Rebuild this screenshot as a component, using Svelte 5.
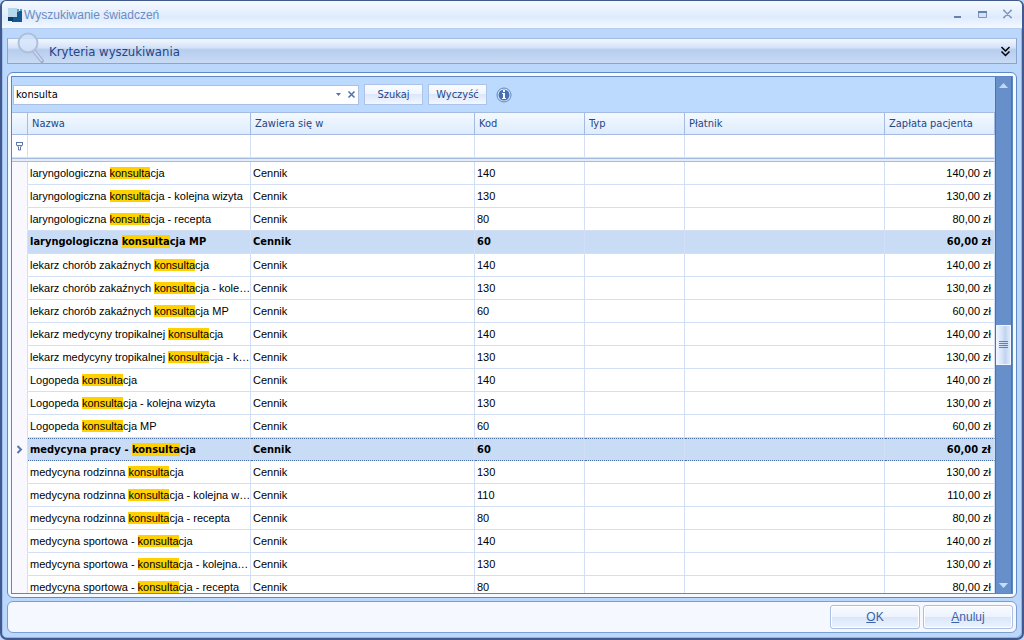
<script>
  let query = "konsulta";

  const columns = [
    { title: "Nazwa", cls: "name" },
    { title: "Zawiera się w", cls: "parent" },
    { title: "Kod", cls: "code" },
    { title: "Typ", cls: "type" },
    { title: "Płatnik", cls: "payer" },
    { title: "Zapłata pacjenta", cls: "price" },
  ];

  let rows = [
    { before: "laryngologiczna ", after: "cja", code: 140 },
    { before: "laryngologiczna ", after: "cja - kolejna wizyta", code: 130 },
    { before: "laryngologiczna ", after: "cja - recepta", code: 80 },
    { before: "laryngologiczna ", after: "cja MP", code: 60, bold: true },
    { before: "lekarz chorób zakaźnych ", after: "cja", code: 140 },
    { before: "lekarz chorób zakaźnych ", after: "cja - kole…", code: 130 },
    { before: "lekarz chorób zakaźnych ", after: "cja MP", code: 60 },
    { before: "lekarz medycyny tropikalnej ", after: "cja", code: 140 },
    { before: "lekarz medycyny tropikalnej ", after: "cja - k…", code: 130 },
    { before: "Logopeda ", after: "cja", code: 140 },
    { before: "Logopeda ", after: "cja - kolejna wizyta", code: 130 },
    { before: "Logopeda ", after: "cja MP", code: 60 },
    { before: "medycyna pracy - ", after: "cja", code: 60, bold: true },
    { before: "medycyna rodzinna ", after: "cja", code: 130 },
    { before: "medycyna rodzinna ", after: "cja - kolejna w…", code: 110 },
    { before: "medycyna rodzinna ", after: "cja - recepta", code: 80 },
    { before: "medycyna sportowa - ", after: "cja", code: 140 },
    { before: "medycyna sportowa - ", after: "cja - kolejna…", code: 130 },
    { before: "medycyna sportowa - ", after: "cja - recepta", code: 80 },
  ];
  let selected = 12;
  let scrolled = 0.48;
</script>

<div class="window">
  <header class="titlebar">
    <svg class="logo" width="16" height="16" viewBox="0 0 16 16">
      <path d="M5 4h10v11H5z" fill="#17578f" />
      <path d="M10 2h2v3h-2zM13 2h2v2h-2z" fill="#5d9cc6" />
      <path d="M1 1h9v9H1z" fill="#b5d8ea" />
      <path d="M1 10h5v4H1z" fill="#0e3c69" />
    </svg>
    <h1>Wyszukiwanie świadczeń</h1>
    <button class="sys" aria-label="Minimalizuj">
      <svg width="11" height="11" viewBox="0 0 11 11"><path d="M2 7h7v2H2z" fill="#6681ae" /></svg>
    </button>
    <button class="sys" aria-label="Maksymalizuj">
      <svg width="11" height="11" viewBox="0 0 11 11">
        <path d="M1.5 2.5h8v6h-8z" fill="#d3e2f8" stroke="#7b96c2" />
        <path d="M1 2h9v2H1z" fill="#6681ae" />
      </svg>
    </button>
    <button class="sys" aria-label="Zamknij">
      <svg width="11" height="11" viewBox="0 0 11 11">
        <path d="M2 1.5l7 7M9 1.5l-7 7M1 1.500h2M8 1.500h2M1 8.500h2M8 8.500h2" stroke="#8298bd" stroke-width="1.6" />
      </svg>
    </button>
  </header>

  <button class="criteria">
    <svg class="lens" width="30" height="32" viewBox="0 0 30 32">
      <path d="M18 19l8 10" stroke="#9fb0d2" stroke-width="4" stroke-linecap="round" />
      <path d="M18 19l8 10" stroke="#c9d6ee" stroke-width="2" />
      <circle cx="12" cy="11" r="9.500" fill="#d5e4fa" fill-opacity=".8" stroke="#b0bfda" stroke-width="2" />
    </svg>
    <span>Kryteria wyszukiwania</span>
    <svg width="11" height="11" viewBox="0 0 11 11">
      <path d="M1.5 1l4 4 4-4M1.5 5.500l4 4 4-4" fill="none" stroke="#000" stroke-width="1.5" />
    </svg>
  </button>

  <main class="panel">
    <div class="inner">
      <div class="content">
        <div class="search">
          <div class="combo">
            <input aria-label="Szukana fraza" bind:value={query} />
            <button aria-label="Rozwiń">
              <svg width="7" height="5" viewBox="0 0 7 5"><path d="M1 1h5L3.500 4z" fill="#5273ac" /></svg>
            </button>
            <button aria-label="Usuń tekst" on:click={() => (query = "")}>
              <svg width="9" height="9" viewBox="0 0 9 9">
                <path d="M1.500 1.500l6 6M7.500 1.500l-6 6" stroke="#5273ac" stroke-width="1.6" />
              </svg>
            </button>
          </div>
          <button class="small">Szukaj</button>
          <button class="small">Wyczyść</button>
          <svg class="info" width="16" height="16" viewBox="0 0 16 16">
            <circle cx="8" cy="8" r="7" fill="#dceafb" stroke="#5f84bd" />
            <circle cx="8" cy="8" r="5.500" fill="#4672b5" />
            <path d="M7 3h2v2H7zM6 6h3v5h1v1H6v-1h1V7H6z" fill="#fff" />
          </svg>
        </div>

        <div class="grid">
          <table>
            <colgroup>
              <col class="mark" />
              {#each columns as column}
                <col class={column.cls} />
              {/each}
            </colgroup>
            <thead>
              <tr class="titles">
                <td></td>
                {#each columns as column}
                  <th>{column.title}</th>
                {/each}
              </tr>
              <tr class="filter">
                <td>
                  <svg width="9" height="10" viewBox="0 0 9 10">
                    <path d="M1 1.500h7M1.500 2v2l2 2v3h2V6l2-2V2M2 4.500h5" fill="none" stroke="#5b78ad" />
                  </svg>
                </td>
                {#each columns as column}
                  <td></td>
                {/each}
              </tr>
              <tr class="split"><td colspan="7"></td></tr>
            </thead>
            <tbody>
              {#each rows as row, index}
                <tr
                  class:bold={row.bold}
                  class:selected={index === selected}
                  on:click={() => (selected = index)}
                >
                  <td>
                    {#if index === selected}
                      <svg width="7" height="9" viewBox="0 0 7 9">
                        <path d="M1.500 1l3.500 3.500L1.500 8" fill="none" stroke="#5b75aa" stroke-width="2" />
                      </svg>
                    {/if}
                  </td>
                  <td>{row.before}<mark>konsulta</mark>{row.after}</td>
                  <td>Cennik</td>
                  <td>{row.code}</td>
                  <td></td>
                  <td></td>
                  <td class="money">{row.code},00 zł</td>
                </tr>
              {/each}
            </tbody>
          </table>
        </div>
      </div>

      <div class="scrollbar">
        <button aria-label="W górę">
          <svg width="9" height="5" viewBox="0 0 9 5"><path d="M0 5h9L4.500 0z" fill="#c3d8f8" /></svg>
        </button>
        <div class="track">
          <div class="thumb" style="top: {scrolled * 100}%">
            <svg width="9" height="8" viewBox="0 0 9 8">
              <path d="M0 .5h9M0 2.500h9M0 4.500h9M0 6.500h9" stroke="#5b82bf" />
            </svg>
          </div>
        </div>
        <button aria-label="W dół">
          <svg width="9" height="5" viewBox="0 0 9 5"><path d="M0 0h9L4.500 5z" fill="#c3e0fb" /></svg>
        </button>
      </div>
    </div>
  </main>

  <footer>
    <button><u>O</u>K</button>
    <button><u>A</u>nuluj</button>
  </footer>
</div>

<style>
  :global(body) {
    background: #bcd8fb;
  }
  .window {
    box-sizing: border-box;
    display: flex;
    flex-direction: column;
    height: 100vh;
    padding: 0 5px 5px;
    border: 1px solid #41598c;
    border-width: 1px 2px 2px;
    border-radius: 6px 6px 7px 7px;
    background: #bbd7fb;
    box-shadow: inset 1px 0 #9dbdea, inset -1px -1px #8fb3e4;
    font-family: Tahoma, "DejaVu Sans Condensed", "Liberation Sans", sans-serif;
    font-size: 11px;
    color: #000;
  }
  button,
  input {
    margin: 0;
    padding: 0;
    border: none;
    background: none;
    font: inherit;
    color: #1f4687;
  }
  svg {
    display: block;
    flex: none;
  }
  .titlebar {
    display: flex;
    align-items: center;
    gap: 14px;
    height: 28px;
    margin: 0 -5px;
    padding: 0 9px 0 5px;
    box-sizing: border-box;
    border-bottom: 1px solid #b3cdf3;
    border-radius: 5px 5px 0 0;
    background: linear-gradient(#f6faff, #e6f0fe 40%, #dfebfd 60%, #f2f8ff);
  }
  h1 {
    flex: 1;
    margin: 0 0 0 -13px;
    font-family: "Liberation Sans", sans-serif;
    font-size: 12px;
    font-weight: normal;
    color: #6a8cc4;
  }
  .criteria {
    display: flex;
    align-items: center;
    height: 26px;
    margin-top: 9px;
    padding: 0 5px 0 8px;
    border: 1px solid #8ba5d3;
    border-top-color: #a5bce2;
    background: linear-gradient(#f2f7ff, #d5e3f8 35%, #b7cdee 45%, #c9dbf5);
    font-size: 13px;
    text-align: left;
  }
  .criteria .lens {
    margin: -6px 3px 0 0;
  }
  .criteria span {
    flex: 1;
  }
  .panel {
    display: flex;
    flex: 1;
    min-height: 0;
    margin-top: 8px;
    padding: 3px;
    border: 1px solid #6089c5;
    border-radius: 6px;
    background: #f5faff;
  }
  .inner {
    display: flex;
    flex: 1;
    min-width: 0;
    border: 1px solid #5e87c2;
    background: #bbdafd;
  }
  .content {
    display: flex;
    flex: 1;
    flex-direction: column;
    min-width: 0;
  }
  .search {
    display: flex;
    align-items: center;
    gap: 5px;
    height: 35px;
    padding-left: 1px;
  }
  .combo {
    display: flex;
    align-items: center;
    gap: 5px;
    width: 346px;
    height: 20px;
    padding-right: 2px;
    box-sizing: border-box;
    border: 1px solid #abc1e4;
    background: #fff;
  }
  input {
    flex: 1;
    min-width: 0;
    padding-left: 2px;
    outline: none;
    color: #000;
  }
  .small {
    width: 59px;
    height: 21px;
    border: 1px solid #abc3ea;
    background: linear-gradient(#fafcff, #f0f5fe 45%, #dce7fa 50%, #f3f8ff);
  }
  .info {
    margin-left: 4px;
  }
  .grid {
    flex: 1;
    min-height: 0;
    overflow: hidden;
    background: #fff;
  }
  table {
    width: 100%;
    table-layout: fixed;
    border-spacing: 0;
  }
  .mark {
    width: 16px;
  }
  .name {
    width: 223px;
  }
  .code,
  .price {
    width: 110px;
  }
  .type {
    width: 100px;
  }
  .payer {
    width: 200px;
  }
  th,
  td {
    box-sizing: border-box;
    height: 23px;
    padding: 0 2px;
    border-right: 1px solid #d3dff4;
    border-bottom: 1px solid #d3dff4;
    line-height: 14px;
    text-align: left;
    white-space: nowrap;
  }
  .titles th,
  .titles td {
    padding: 0 4px;
    border-top: 1px solid #a5bbe2;
    border-right-color: #a5bbe2;
    border-bottom-color: #a5bbe2;
    background: linear-gradient(#f3f9ff, #deecfd);
    font-weight: normal;
    color: #1f4687;
  }
  .filter td {
    height: 23px;
  }
  .split td {
    height: 4px;
    padding: 0;
    border-top: 1px solid #a5bbe2;
    border-bottom: 1px solid #a5bbe2;
    background: #e4edfc;
  }
  td:first-child svg {
    margin-left: 1px;
  }
  tbody {
    font-family: Tahoma, "Liberation Sans", sans-serif;
  }
  tbody td:first-child {
    padding-left: 3px;
    border-bottom-color: #f8f8fe;
    background: #f8f8fe;
  }
  td.money {
    padding-right: 3px;
    text-align: right;
  }
  mark {
    background: #ffd100;
    color: inherit;
  }
  .bold {
    font-family: Tahoma, "DejaVu Sans Condensed", sans-serif;
    font-weight: bold;
  }
  .bold td:not(:first-child) {
    background: #c9dcf6;
  }
  .selected td:not(:first-child) {
    border-top: 1px dotted #4d6fa8;
    border-bottom: 1px dotted #4d6fa8;
  }
  .scrollbar {
    display: flex;
    flex-direction: column;
    width: 17px;
    box-sizing: border-box;
    border-left: 1px solid #4a73b0;
    border-right: 1px solid #4a73b0;
    background: #6790cb;
  }
  .scrollbar button {
    display: flex;
    align-items: center;
    justify-content: center;
    height: 16px;
  }
  .track {
    position: relative;
    flex: 1;
  }
  .thumb {
    position: absolute;
    left: 0;
    right: 0;
    display: flex;
    align-items: center;
    justify-content: center;
    height: 38px;
    border: 1px solid #f0f5ff;
    background: linear-gradient(90deg, #edf3fe, #cfdef6 50%, #c0d2f0 60%, #dfe9fb);
  }
  footer {
    display: flex;
    justify-content: flex-end;
    gap: 3px;
    margin-top: 3px;
    padding: 3px;
    border: 1px solid #7b9dd2;
    border-radius: 6px;
    background: #f6f8ff;
  }
  footer button {
    width: 90px;
    height: 24px;
    border: 1px solid #a9bfe4;
    border-radius: 3px;
    background: linear-gradient(#f8fbff, #edf3fe 48%, #dbe6f9 52%, #ecf3ff);
    box-shadow: inset 0 0 0 1px #fff;
    font-family: "Liberation Sans", sans-serif;
    font-size: 12px;
    color: #3a63a8;
  }
</style>
